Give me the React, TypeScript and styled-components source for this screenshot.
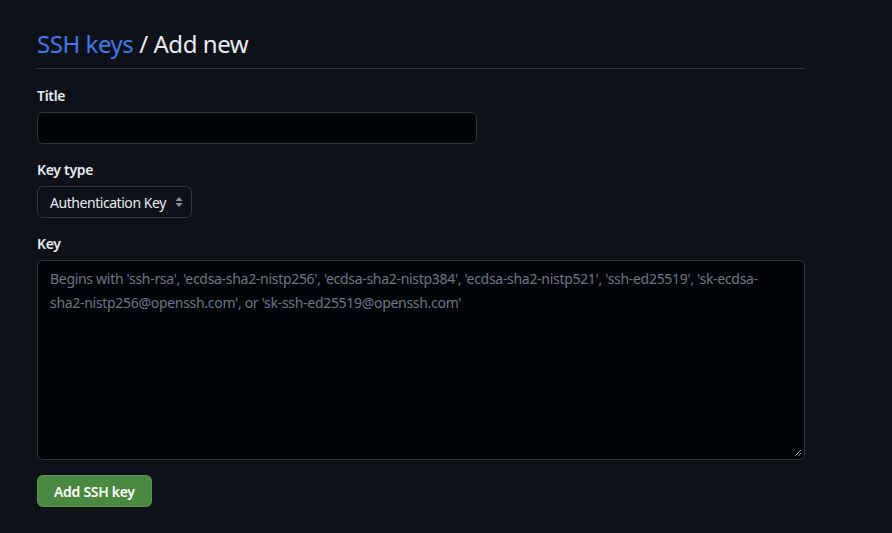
import React from "react";
import styled, { createGlobalStyle } from "styled-components";

const Global = createGlobalStyle`
  html, body { margin: 0; padding: 0; background: #0e1117; }
  body { font-family: "Noto Sans", "Open Sans", "Liberation Sans", sans-serif; color: #e6edf3; letter-spacing: -0.3px; }
  * { box-sizing: border-box; }
`;

const Page = styled.div`
  min-height: 533px;
  background: #0e1117;
  padding: 28px 0 0 37px;
`;

const Container = styled.div`
  width: 768px;
`;

const Header = styled.div`
  border-bottom: 1px solid #30363d;
  padding-bottom: 8px;
  margin-bottom: 17px;
`;

const Heading = styled.h2`
  margin: 0;
  font-size: 24px;
  font-weight: 400;
  line-height: 32px;
  letter-spacing: -0.45px;
  color: #e6edf3;
`;

const Crumb = styled.a`
  color: #4478e8;
  text-decoration: none;
`;

const Field = styled.div`
  display: flex;
  flex-direction: column;
  margin-bottom: 16px;
`;

const Label = styled.label`
  font-size: 14px;
  font-weight: 600;
  line-height: 20px;
  margin-bottom: 6px;
  color: #e6edf3;
`;

const Input = styled.input`
  width: 440px;
  height: 32px;
  background: #010409;
  border: 1px solid #30363d;
  border-radius: 6px;
  color: #e6edf3;
  font: inherit;
  font-size: 14px;
  padding: 5px 12px;
  outline: none;
`;

const SelectBox = styled.div`
  position: relative;
  width: 155px;
  height: 32px;
  border: 1px solid #30363d;
  border-radius: 6px;
  background: #0e1117;
  display: flex;
  align-items: center;
  padding: 0 24px 0 12px;
  font-size: 14px;
  letter-spacing: -0.45px;
  white-space: nowrap;
  color: #e6edf3;
`;

const Arrows = styled.svg`
  position: absolute;
  right: 8px;
  top: 50%;
  transform: translateY(-50%);
`;

const TextArea = styled.div`
  width: 768px;
  height: 200px;
  background: #010409;
  border: 1px solid #30363d;
  border-radius: 6px;
  padding: 6px 12px;
  font-size: 14px;
  line-height: 24px;
  color: #6e7681;
  position: relative;
`;

const Grip = styled.svg`
  position: absolute;
  right: 2px;
  bottom: 2px;
`;

const Button = styled.button`
  height: 32px;
  padding: 0 16px;
  margin-top: -1px;
  background: #4a8a40;
  border: 1px solid rgba(240, 246, 252, 0.1);
  border-radius: 6px;
  color: #ffffff;
  font: inherit;
  font-size: 14px;
  font-weight: 600;
  letter-spacing: -0.3px;
`;

export default function App() {
  return (
    <>
      <Global />
      <Page>
        <Container>
          <Header>
            <Heading>
              <Crumb href="#">SSH keys</Crumb> / Add new
            </Heading>
          </Header>
          <Field>
            <Label>Title</Label>
            <Input />
          </Field>
          <Field>
            <Label>Key type</Label>
            <SelectBox>
              Authentication Key
              <Arrows width="8" height="12" viewBox="0 0 8 12">
                <path d="M4 1 L7.5 5 H0.5 Z" fill="#8b949e" />
                <path d="M4 11 L7.5 7 H0.5 Z" fill="#8b949e" />
              </Arrows>
            </SelectBox>
          </Field>
          <Field>
            <Label>Key</Label>
            <TextArea>
              Begins with 'ssh-rsa', 'ecdsa-sha2-nistp256', 'ecdsa-sha2-nistp384', 'ecdsa-sha2-nistp521', 'ssh-ed25519', 'sk-ecdsa-sha2-nistp256@openssh.com', or 'sk-ssh-ed25519@openssh.com'
              <Grip width="8" height="8" viewBox="0 0 8 8">
                <path d="M7 1 L1 7 M7 4 L4 7" stroke="#8b949e" strokeWidth="1" />
              </Grip>
            </TextArea>
          </Field>
          <Button>Add SSH key</Button>
        </Container>
      </Page>
    </>
  );
}
